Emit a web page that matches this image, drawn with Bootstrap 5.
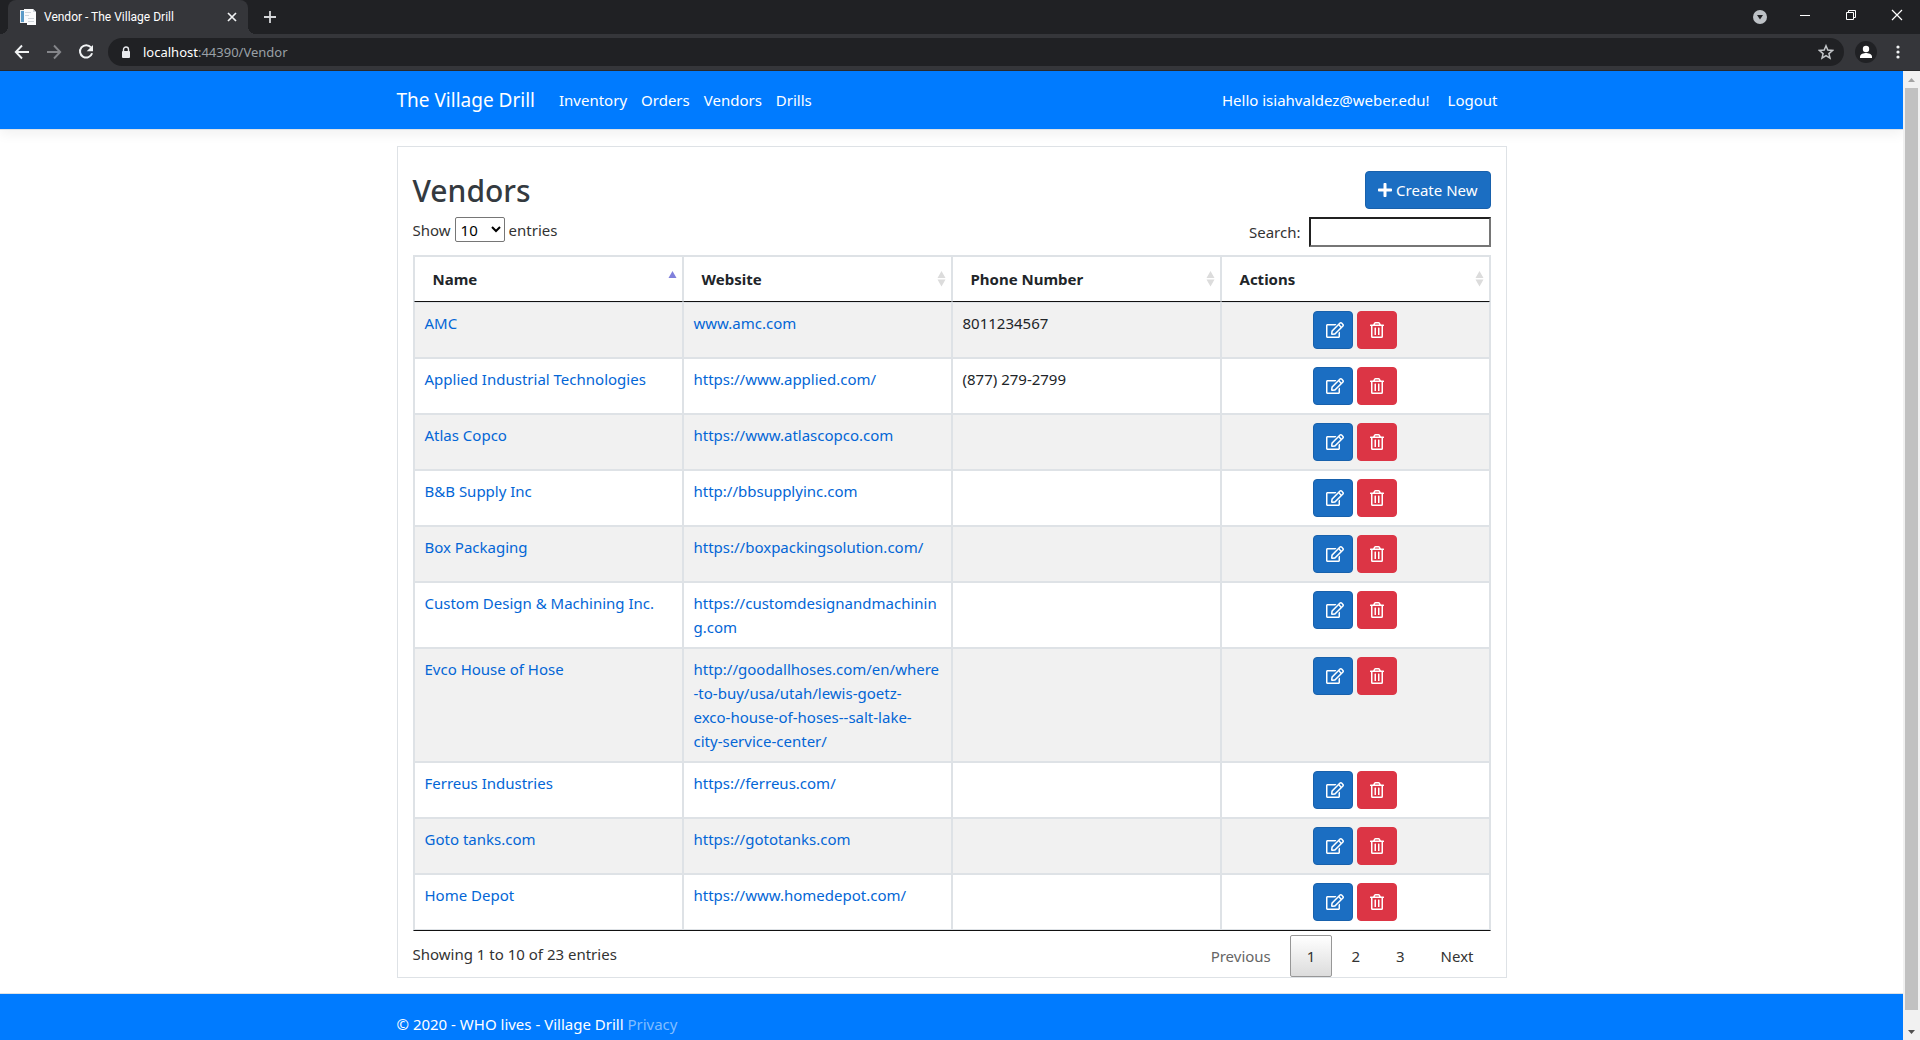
<!DOCTYPE html>
<html lang="en">
<head>
<meta charset="utf-8">
<meta name="viewport" content="width=device-width, initial-scale=1">
<title>Vendor - The Village Drill</title>
<link href="https://cdn.jsdelivr.net/npm/bootstrap@5.3.0/dist/css/bootstrap.min.css" rel="stylesheet">
<style>
body{font-family:"Noto Sans","Open Sans",sans-serif;font-size:15px;line-height:24px;color:#212529;height:100vh;overflow:hidden}
svg{display:block;flex:none}
.ui-plain{background:none;border:0;padding:0;color:inherit}
/* browser frame */
.tabstrip{background:#202124;height:34px;padding-left:8px}
.tab-item{width:240px;height:34px;background:#35363a;color:#fff;border-radius:8px 8px 0 0;padding:0 11px 0 12px;position:relative}
.tab-item::before,.tab-item::after{content:"";position:absolute;bottom:0;width:8px;height:8px}
.tab-item::before{left:-8px;background:radial-gradient(circle at 0 0,#202124 8px,#35363a 8px)}
.tab-item::after{right:-8px;background:radial-gradient(circle at 100% 0,#202124 8px,#35363a 8px)}
.tab-title{font-family:Roboto,"Noto Sans",sans-serif;font-size:12px}
.tab-add{margin-left:16px}
.win-buttons{gap:30px;padding-right:15px}
.toolbar{background:#35363a;height:37px;padding:0 18px 0 14px;border-bottom:1px solid #28292c}
.omnibox{background:#202124;height:28px;border-radius:14px;padding:0 10px 0 13px;font-size:13px;margin:0 11px 0 14px}
.omnibox .host{color:#fff}.omnibox .path{color:#9aa0a6}
.avatar-dot{width:22px;height:22px;border-radius:50%;background:#202124;margin-right:17px}
.scroll-rail{width:17px;background:#f1f1f1}
.scroll-thumb{width:13px;background:#c1c1c1;margin-bottom:13px}
.scroll-end{height:17px}
/* site */
.site-width{max-width:1140px;padding:0 15px;margin:0 auto;width:100%}
.site-nav{--bs-navbar-nav-link-padding-x:7px;background:#007bff;border-bottom:1px solid #dee2e6;height:59px;box-shadow:0 4px 12px rgba(0,0,0,.06);padding:0}
.site-nav .nav-link,.site-nav .navbar-brand{color:#fff}
.site-nav .account-links{--bs-navbar-nav-link-padding-x:9px}
.site-nav .navbar-brand{font-size:19px;padding:8px 0;margin-right:17px}
.panel-box{border:1px solid #dee2e6;margin:16px 0 15px;padding:24px 15px 0}
.panel-box h1{font-size:30px;line-height:40px;font-weight:500;color:#343a40}
.panel-head{height:38px}
.btn{font-size:15px;line-height:24px;padding:6px 12px;border-radius:4px}
.btn-create{background:#1b6ec2;border-color:#1861ac;color:#fff}
.btn-icon{width:40px;height:38px;padding:0 0 0 12px}
.dt-tools{color:#333;margin:8px 0}
.dt-tools select{width:50px;height:25px;border:1px solid #767676;border-radius:2px;background:#fff;font-size:15px;line-height:20px;padding:0 1px;color:#000}
.dt-tools input{width:182px;height:30px;border:2px inset #767676;padding:1px 2px}
.dt-grid{width:100%;table-layout:fixed;border-collapse:separate;border-spacing:0;border:1px solid #dee2e6;border-bottom-color:#111}
.dt-grid th,.dt-grid td{border:1px solid #dee2e6}
.dt-grid th{padding:10px 5px 10px 18px;border-bottom-color:#111;font-weight:700}
.dt-grid td{padding:8px 10px;vertical-align:top}
.dt-grid tbody tr:nth-child(odd){background:#f1f1f1}
.dt-grid a{color:#0366d6;text-decoration:none}
.dt-foot{color:#333}
.pager{gap:2px;padding-top:4px}
.pager button{border:1px solid transparent;background:none;border-radius:2px;padding:8px 16px;color:#333}
.pager button:disabled{color:#666}
.pager .current{border-color:#979797;background:linear-gradient(#fff,#dcdcdc)}
.site-foot{background:#007bff;border-top:1px solid #dee2e6;line-height:60px;color:#fff;white-space:nowrap}
.site-foot a{color:#80bdff;text-decoration:none}
</style>
<script src="https://cdn.jsdelivr.net/npm/bootstrap@5.3.0/dist/js/bootstrap.bundle.min.js"></script>
</head>
<body class="d-flex flex-column">
<svg width="0" height="0" class="position-absolute" aria-hidden="true">
<symbol id="i-edit" viewBox="0 0 576 512"><path fill="#fff" d="M402.3 344.9l32-32c5-5 13.7-1.5 13.7 5.7V464c0 26.5-21.5 48-48 48H48c-26.5 0-48-21.5-48-48V112c0-26.5 21.5-48 48-48h273.5c7.1 0 10.7 8.6 5.7 13.7l-32 32c-1.5 1.5-3.5 2.3-5.7 2.3H48v352h352V350.5c0-2.1.8-4.1 2.3-5.6zm156.6-201.8L296.3 405.7l-90.4 10c-26.2 2.9-48.5-19.2-45.6-45.6l10-90.4L432.9 17.1c22.9-22.9 59.9-22.9 82.7 0l43.2 43.2c22.9 22.9 22.9 60 .1 82.8zM460.1 174L402 115.9 216.2 301.8l-7.3 65.3 65.3-7.3L460.1 174zm64.8-79.7l-43.2-43.2c-4.1-4.1-10.8-4.1-14.8 0L436 82l58.1 58.1 30.9-30.9c4-4.2 4-10.8-.1-14.9z"/></symbol>
<symbol id="i-trash" viewBox="0 0 448 512"><path fill="#fff" d="M268 416h24a12 12 0 0 0 12-12V188a12 12 0 0 0-12-12h-24a12 12 0 0 0-12 12v216a12 12 0 0 0 12 12zM432 80h-82.41l-34-56.7A48 48 0 0 0 274.41 0H173.59a48 48 0 0 0-41.16 23.3L98.41 80H16A16 16 0 0 0 0 96v16a16 16 0 0 0 16 16h16v336a48 48 0 0 0 48 48h288a48 48 0 0 0 48-48V128h16a16 16 0 0 0 16-16V96a16 16 0 0 0-16-16zM171.84 50.91A6 6 0 0 1 177 48h94a6 6 0 0 1 5.15 2.91L293.61 80H154.39zM368 464H80V128h288zm-212-48h24a12 12 0 0 0 12-12V188a12 12 0 0 0-12-12h-24a12 12 0 0 0-12 12v216a12 12 0 0 0 12 12z"/></symbol>
<symbol id="i-both" viewBox="0 0 9 16"><path fill="#dcdcdc" d="M4.500 0L8.500 7H.5zM.5 8.500h8L4.500 15.500z"/></symbol>
<symbol id="i-asc" viewBox="0 0 9 16"><path fill="#8080dc" d="M4.500 0L8.500 7H.5z"/></symbol>
</svg>

<header>
<div class="tabstrip d-flex align-items-start">
 <div class="tab-item d-flex align-items-center">
  <svg width="16" height="16" viewBox="0 0 16 16"><path fill="#e9edf0" d="M0 1h11v13H0z"/><path fill="#5b9bc8" d="M1 2h3v11H1z"/><path fill="#fafbfc" d="M4 0h9l3 3v13H7v-2H4z"/><path fill="#cfd5db" d="M5 3h6v1H5zm0 3h4v1H5zm3 3h6v1H8zm0 3h6v1H8zM13 0l3 3h-3z"/></svg>
  <span class="tab-title ms-2 me-auto">Vendor - The Village Drill</span>
  <button class="ui-plain" aria-label="Close tab"><svg width="10" height="10" viewBox="0 0 10 10"><path d="M1 1l8 8M9 1L1 9" stroke="#f1f3f4" stroke-width="1.700"/></svg></button>
 </div>
 <button class="ui-plain tab-add align-self-center" aria-label="New tab"><svg width="12" height="12" viewBox="0 0 12 12"><path d="M6 0v12M0 6h12" stroke="#d5d7da" stroke-width="1.800"/></svg></button>
 <div class="win-buttons d-flex align-items-center ms-auto pt-1">
  <button class="ui-plain pt-1" aria-label="Search tabs"><svg width="16" height="18" viewBox="0 0 16 18"><circle cx="9" cy="9" r="7" fill="#bdc1c6"/><path d="M6 7h6l-3 4.500z" fill="#202124"/></svg></button>
  <button class="ui-plain" aria-label="Minimize"><svg width="16" height="20" viewBox="0 0 16 20"><path d="M3 10.500h10" stroke="#fff"/></svg></button>
  <button class="ui-plain" aria-label="Restore"><svg width="16" height="20" viewBox="0 0 16 20"><path d="M3.500 7.500h7v7h-7zM5.500 7V5.500h7v7H11" fill="none" stroke="#fff"/></svg></button>
  <button class="ui-plain" aria-label="Close"><svg width="16" height="20" viewBox="0 0 16 20"><path d="M3 5l10 10M13 5L3 15" stroke="#fff" stroke-width="1.200"/></svg></button>
 </div>
</div>
<div class="toolbar d-flex align-items-center">
 <button class="ui-plain me-3" aria-label="Back"><svg width="16" height="16" viewBox="0 0 16 16"><path d="M15 8H2M8 1.500L1.800 8 8 14.500" fill="none" stroke="#f1f3f4" stroke-width="1.900"/></svg></button>
 <button class="ui-plain me-3" aria-label="Forward"><svg width="16" height="16" viewBox="0 0 16 16"><path d="M1 8h13M8 1.500L14.200 8 8 14.500" fill="none" stroke="#85868a" stroke-width="1.900"/></svg></button>
 <button class="ui-plain" aria-label="Reload"><svg width="16" height="16" viewBox="0 0 16 16"><path d="M13 3.400A6.200 6.200 0 1 0 14.100 9.300" fill="none" stroke="#f1f3f4" stroke-width="2"/><path d="M15 1v6.300H8.700z" fill="#f1f3f4"/></svg></button>
 <div class="omnibox d-flex align-items-center flex-grow-1">
  <svg width="10" height="13" viewBox="0 0 10 13"><path d="M2.500 6V3.500a2.500 2.500 0 0 1 5 0V6" fill="none" stroke="#e8eaed" stroke-width="1.400"/><rect x="1" y="5" width="8" height="7" rx="1" fill="#e8eaed"/></svg>
  <span class="ms-2 me-auto ps-1"><span class="host">localhost</span><span class="path">:44390/Vendor</span></span>
  <button class="ui-plain" aria-label="Bookmark"><svg width="16" height="16" viewBox="0 0 16 16"><path d="M8 1.800l1.800 4.300 4.700.4-3.600 3.100 1.100 4.600L8 11.700l-4 2.500 1.100-4.600L1.500 6.500l4.700-.4z" fill="none" stroke="#c4c7ca" stroke-width="1.500"/></svg></button>
 </div>
 <button class="ui-plain avatar-dot" aria-label="Profile"><svg width="22" height="22" viewBox="0 0 22 22"><circle cx="11" cy="8" r="3.200" fill="#fff"/><path d="M5 17v-1.500c0-2.500 4-3.500 6-3.500s6 1 6 3.500V17z" fill="#fff"/></svg></button>
 <button class="ui-plain" aria-label="Menu"><svg width="8" height="16" viewBox="0 0 8 16"><g fill="#f1f3f4"><circle cx="4" cy="3" r="1.600"/><circle cx="4" cy="8" r="1.600"/><circle cx="4" cy="13" r="1.600"/></g></svg></button>
</div>
</header>

<div class="d-flex flex-grow-1 overflow-hidden">
<div class="flex-grow-1 overflow-hidden">
 <nav class="navbar navbar-expand site-nav">
  <div class="site-width d-flex align-items-center">
   <a class="navbar-brand" href="#">The Village Drill</a>
   <div class="navbar-nav me-auto">
    <a class="nav-link" href="#">Inventory</a><a class="nav-link" href="#">Orders</a><a class="nav-link" href="#">Vendors</a><a class="nav-link" href="#">Drills</a>
   </div>
   <div class="navbar-nav account-links">
    <a class="nav-link" href="#">Hello isiahvaldez@weber.edu!</a><button class="nav-link btn border-0">Logout</button>
   </div>
  </div>
 </nav>
 <main class="site-width">
  <section class="panel-box">
   <div class="panel-head d-flex justify-content-between align-items-start">
    <h1 class="m-0">Vendors</h1>
    <button class="btn btn-create d-flex align-items-center gap-1"><svg width="14" height="16" viewBox="0 0 448 512"><path fill="#fff" d="M416 208H272V64c0-17.670-14.330-32-32-32h-32c-17.670 0-32 14.330-32 32v144H32c-17.670 0-32 14.330-32 32v32c0 17.670 14.330 32 32 32h144v144c0 17.670 14.330 32 32 32h32c17.670 0 32-14.330 32-32V304h144c17.670 0 32-14.330 32-32v-32c0-17.670-14.330-32-32-32z"/></svg>Create New</button>
   </div>
   <div class="dt-tools d-flex justify-content-between align-items-start">
    <label class="d-flex align-items-center gap-1">Show <select><option>10</option><option>25</option><option>50</option></select> entries</label>
    <label class="d-flex align-items-center gap-2">Search: <input type="search"></label>
   </div>
   <table class="dt-grid">
    <thead><tr>
     <th><div class="d-flex justify-content-between align-items-center">Name<svg width="9" height="16"><use href="#i-asc"/></svg></div></th>
     <th><div class="d-flex justify-content-between align-items-center">Website<svg width="9" height="16"><use href="#i-both"/></svg></div></th>
     <th><div class="d-flex justify-content-between align-items-center">Phone Number<svg width="9" height="16"><use href="#i-both"/></svg></div></th>
     <th><div class="d-flex justify-content-between align-items-center">Actions<svg width="9" height="16"><use href="#i-both"/></svg></div></th>
    </tr></thead>
    <tbody>
     <tr><td><a href="#">AMC</a></td><td><a href="#">www.amc.com</a></td><td>8011234567</td><td><div class="d-flex justify-content-center gap-1"><button class="btn btn-create btn-icon" aria-label="Edit"><svg width="18" height="16"><use href="#i-edit"/></svg></button><button class="btn btn-danger btn-icon" aria-label="Delete"><svg width="14" height="16"><use href="#i-trash"/></svg></button></div></td></tr>
     <tr><td><a href="#">Applied Industrial Technologies</a></td><td><a href="#">https://www.applied.com/</a></td><td>(877) 279-2799</td><td><div class="d-flex justify-content-center gap-1"><button class="btn btn-create btn-icon" aria-label="Edit"><svg width="18" height="16"><use href="#i-edit"/></svg></button><button class="btn btn-danger btn-icon" aria-label="Delete"><svg width="14" height="16"><use href="#i-trash"/></svg></button></div></td></tr>
     <tr><td><a href="#">Atlas Copco</a></td><td><a href="#">https://www.atlascopco.com</a></td><td></td><td><div class="d-flex justify-content-center gap-1"><button class="btn btn-create btn-icon" aria-label="Edit"><svg width="18" height="16"><use href="#i-edit"/></svg></button><button class="btn btn-danger btn-icon" aria-label="Delete"><svg width="14" height="16"><use href="#i-trash"/></svg></button></div></td></tr>
     <tr><td><a href="#">B&amp;B Supply Inc</a></td><td><a href="#">http://bbsupplyinc.com</a></td><td></td><td><div class="d-flex justify-content-center gap-1"><button class="btn btn-create btn-icon" aria-label="Edit"><svg width="18" height="16"><use href="#i-edit"/></svg></button><button class="btn btn-danger btn-icon" aria-label="Delete"><svg width="14" height="16"><use href="#i-trash"/></svg></button></div></td></tr>
     <tr><td><a href="#">Box Packaging</a></td><td><a href="#">https://boxpackingsolution.com/</a></td><td></td><td><div class="d-flex justify-content-center gap-1"><button class="btn btn-create btn-icon" aria-label="Edit"><svg width="18" height="16"><use href="#i-edit"/></svg></button><button class="btn btn-danger btn-icon" aria-label="Delete"><svg width="14" height="16"><use href="#i-trash"/></svg></button></div></td></tr>
     <tr><td><a href="#">Custom Design &amp; Machining Inc.</a></td><td><a href="#">https://customdesignandmachinin<br>g.com</a></td><td></td><td><div class="d-flex justify-content-center gap-1"><button class="btn btn-create btn-icon" aria-label="Edit"><svg width="18" height="16"><use href="#i-edit"/></svg></button><button class="btn btn-danger btn-icon" aria-label="Delete"><svg width="14" height="16"><use href="#i-trash"/></svg></button></div></td></tr>
     <tr><td><a href="#">Evco House of Hose</a></td><td><a href="#">http://goodallhoses.com/en/where<br>-to-buy/usa/utah/lewis-goetz-<br>exco-house-of-hoses--salt-lake-<br>city-service-center/</a></td><td></td><td><div class="d-flex justify-content-center gap-1"><button class="btn btn-create btn-icon" aria-label="Edit"><svg width="18" height="16"><use href="#i-edit"/></svg></button><button class="btn btn-danger btn-icon" aria-label="Delete"><svg width="14" height="16"><use href="#i-trash"/></svg></button></div></td></tr>
     <tr><td><a href="#">Ferreus Industries</a></td><td><a href="#">https://ferreus.com/</a></td><td></td><td><div class="d-flex justify-content-center gap-1"><button class="btn btn-create btn-icon" aria-label="Edit"><svg width="18" height="16"><use href="#i-edit"/></svg></button><button class="btn btn-danger btn-icon" aria-label="Delete"><svg width="14" height="16"><use href="#i-trash"/></svg></button></div></td></tr>
     <tr><td><a href="#">Goto tanks.com</a></td><td><a href="#">https://gototanks.com</a></td><td></td><td><div class="d-flex justify-content-center gap-1"><button class="btn btn-create btn-icon" aria-label="Edit"><svg width="18" height="16"><use href="#i-edit"/></svg></button><button class="btn btn-danger btn-icon" aria-label="Delete"><svg width="14" height="16"><use href="#i-trash"/></svg></button></div></td></tr>
     <tr><td><a href="#">Home Depot</a></td><td><a href="#">https://www.homedepot.com/</a></td><td></td><td><div class="d-flex justify-content-center gap-1"><button class="btn btn-create btn-icon" aria-label="Edit"><svg width="18" height="16"><use href="#i-edit"/></svg></button><button class="btn btn-danger btn-icon" aria-label="Delete"><svg width="14" height="16"><use href="#i-trash"/></svg></button></div></td></tr>
    </tbody>
   </table>
   <div class="dt-foot d-flex justify-content-between align-items-center">
    <div>Showing 1 to 10 of 23 entries</div>
    <div class="pager d-flex"><button disabled>Previous</button><button class="current">1</button><button>2</button><button>3</button><button>Next</button></div>
   </div>
  </section>
 </main>
 <footer class="site-foot"><div class="site-width">© 2020 - WHO lives - Village Drill <a href="#">Privacy</a></div></footer>
</div>
<div class="scroll-rail d-flex flex-column align-items-center" aria-hidden="true">
 <div class="scroll-end d-flex align-items-center"><svg width="7" height="4" viewBox="0 0 7 4"><path d="M3.500 0L7 4H0z" fill="#a3a3a3"/></svg></div>
 <div class="scroll-thumb flex-grow-1"></div>
 <div class="scroll-end d-flex align-items-center"><svg width="7" height="4" viewBox="0 0 7 4"><path d="M0 0h7L3.500 4z" fill="#505050"/></svg></div>
</div>
</div>
</body>
</html>
